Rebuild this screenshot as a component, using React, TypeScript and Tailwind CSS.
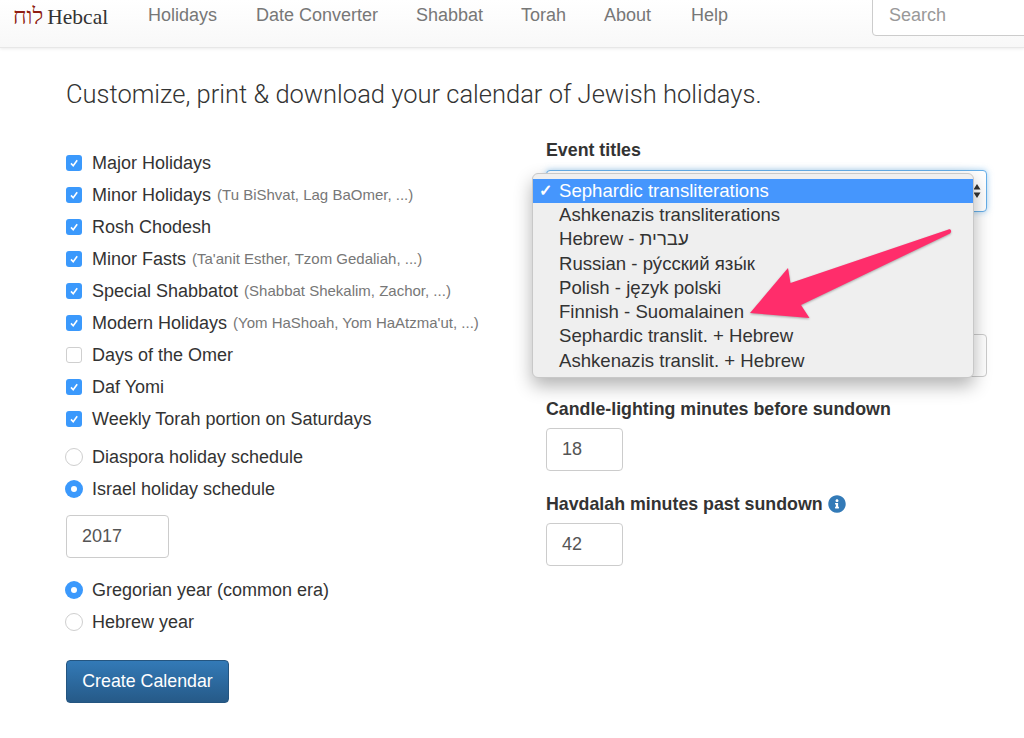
import { FaInfoCircle } from 'react-icons/fa';

const navLinks = [
  { label: 'Holidays', className: 'w-[108px]' },
  { label: 'Date Converter', className: 'w-[160px]' },
  { label: 'Shabbat', className: 'w-[105px]' },
  { label: 'Torah', className: 'w-[83px]' },
  { label: 'About', className: 'w-[87px]' },
  { label: 'Help', className: 'w-[60px]' },
];

const holidayOptions = [
  { label: 'Major Holidays', checked: true },
  { label: 'Minor Holidays', note: '(Tu BiShvat, Lag BaOmer, ...)', checked: true },
  { label: 'Rosh Chodesh', checked: true },
  { label: 'Minor Fasts', note: "(Ta'anit Esther, Tzom Gedaliah, ...)", checked: true },
  { label: 'Special Shabbatot', note: '(Shabbat Shekalim, Zachor, ...)', checked: true },
  { label: 'Modern Holidays', note: "(Yom HaShoah, Yom HaAtzma'ut, ...)", checked: true },
  { label: 'Days of the Omer', checked: false },
  { label: 'Daf Yomi', checked: true },
  { label: 'Weekly Torah portion on Saturdays', checked: true },
];

const titleOptions = [
  'Ashkenazis transliterations',
  'Hebrew - עברית',
  'Russian - ру́сский язы́к',
  'Polish - język polski',
  'Finnish - Suomalainen',
  'Sephardic translit. + Hebrew',
  'Ashkenazis translit. + Hebrew',
];

function CheckRow({ label, note, checked }: { label: string; note?: string; checked: boolean }) {
  return (
    <div className="flex h-[32px] items-center">
      {checked ? (
        <span className="flex h-[16px] w-[16px] items-center justify-center rounded-[3px] bg-[#3b99fc]">
          <svg width="10" height="10" viewBox="0 0 10 10" fill="none">
            <path d="M2 5.4 4.2 7.8 8.2 2.2" stroke="white" strokeWidth="1.6" />
          </svg>
        </span>
      ) : (
        <span className="h-[16px] w-[16px] rounded-[3px] border border-[#cfcfcf] bg-white" />
      )}
      <span className="ml-[10px] whitespace-nowrap text-[18px]">{label}</span>
      {note && <span className="ml-[6px] whitespace-nowrap text-[15px] text-[#777]">{note}</span>}
    </div>
  );
}

function RadioRow({ label, checked }: { label: string; checked: boolean }) {
  return (
    <div className="flex h-[32px] items-center">
      {checked ? (
        <span className="-ml-px flex h-[18px] w-[18px] items-center justify-center rounded-full bg-[#3b99fc]">
          <span className="h-[6px] w-[6px] rounded-full bg-white" />
        </span>
      ) : (
        <span className="-ml-px h-[18px] w-[18px] rounded-full border border-[#cfcfcf] bg-white" />
      )}
      <span className="ml-[9px] whitespace-nowrap text-[18px]">{label}</span>
    </div>
  );
}

function NumberBox({ value, className }: { value: string; className: string }) {
  return (
    <div className={`flex h-[43px] items-center rounded-[4px] border border-[#ccc] bg-white pl-[15px] text-[18px] text-[#555] ${className}`}>
      {value}
    </div>
  );
}

export default function App() {
  return (
    <div className="relative h-[738px] overflow-hidden bg-white font-['Liberation_Sans',sans-serif] text-[#333]">
      {/* Navbar */}
      <nav className="flex h-[48px] items-start overflow-hidden border-b border-[#e7e7e7] bg-gradient-to-b from-white to-[#f8f8f8] shadow-[0_1px_3px_rgba(0,0,0,0.08)]">
        <div className="flex h-[32px] w-[148px] shrink-0 items-center pl-[13px] pt-[3px] font-['Liberation_Serif',serif]">
          <span className="text-[23px] text-[#8f1d12]">לוח</span>
          <span className="ml-[4px] text-[21.5px] text-[#333]">Hebcal</span>
        </div>
        {navLinks.map((link) => (
          <div key={link.label} className={`flex h-[31px] shrink-0 items-center text-[18px] text-[#777] ${link.className}`}>
            {link.label}
          </div>
        ))}
        <div className="-mt-[6px] ml-[121px] flex h-[42px] w-[200px] shrink-0 items-center rounded-[4px] border border-[#ccc] bg-white pl-[16px] text-[18px] text-[#999]">
          Search
        </div>
      </nav>

      <main className="pl-[66px] pt-[26px]">
        <h1 className="h-[40px] whitespace-nowrap font-['Roboto',sans-serif] text-[25.5px] font-light leading-[40px]">
          Customize, print &amp; download your calendar of Jewish holidays.
        </h1>

        <div className="mt-[26px] flex items-start">
          {/* Left column */}
          <div className="w-[480px] shrink-0 pt-[7px]">
            {holidayOptions.map((option) => (
              <CheckRow key={option.label} {...option} />
            ))}
            <div className="mt-[6px]">
              <RadioRow label="Diaspora holiday schedule" checked={false} />
              <RadioRow label="Israel holiday schedule" checked />
            </div>
            <NumberBox value="2017" className="mt-[10px] w-[103px]" />
            <div className="mt-[16px]">
              <RadioRow label="Gregorian year (common era)" checked />
              <RadioRow label="Hebrew year" checked={false} />
            </div>
            <button className="mt-[22px] flex h-[43px] w-[163px] items-center justify-center rounded-[4px] border border-[#245580] bg-gradient-to-b from-[#337ab7] to-[#265a88] text-[17.8px] text-white">
              Create Calendar
            </button>
          </div>

          {/* Right column */}
          <div className="relative w-[441px] shrink-0">
            <div className="flex h-[20px] items-center text-[17.8px] font-bold">Event titles</div>
            <div className="mt-[10px] flex h-[42px] items-center justify-end rounded-[4px] border border-[#66afe9] bg-white pr-[5px] shadow-[0_0_6px_rgba(102,175,233,0.6)]">
              <svg width="8" height="16" viewBox="0 0 8 16" className="text-[#333]">
                <path d="M4 1 7.5 6.5H.5ZM4 15 .5 9.5h7Z" fill="currentColor" />
              </svg>
            </div>
            <NumberBox value="" className="mt-[122px] w-full" />
            <div className="mt-[22px] flex h-[20px] items-center whitespace-nowrap text-[17.8px] font-bold">
              Candle-lighting minutes before sundown
            </div>
            <NumberBox value="18" className="mt-[9px] w-[77px]" />
            <div className="mt-[23px] flex h-[20px] items-center whitespace-nowrap text-[17.8px] font-bold">
              Havdalah minutes past sundown
              <FaInfoCircle className="-mt-px ml-[5px] text-[#337ab7]" size={18} />
            </div>
            <NumberBox value="42" className="mt-[9px] w-[77px]" />

            {/* Open select menu */}
            <div className="absolute -left-[14px] top-[33px] h-[205px] w-[442px] rounded-[6px] border border-[#c8c8c8] bg-[#efefef] pt-[5px] text-[18.6px] leading-[24.3px] text-[#333] shadow-[0_8px_18px_rgba(0,0,0,0.3)]">
              <div className="flex h-[24px] items-center whitespace-nowrap bg-[#4596fd] text-white">
                <span className="w-[26px] pl-[6px] text-[16px] font-bold">✓</span>
                Sephardic transliterations
              </div>
              {titleOptions.map((title) => (
                <div key={title} className="h-[24.3px] whitespace-nowrap pl-[26px]">
                  {title}
                </div>
              ))}
            </div>
          </div>
        </div>
      </main>

      {/* Annotation arrow */}
      <svg className="pointer-events-none absolute left-0 top-0 drop-shadow-[0_1px_1px_rgba(0,0,0,0.3)]" width="1024" height="738" viewBox="0 0 1024 738">
        <path
          d="M948.5 229.5C950 229 951.5 230 951 232C950.5 233.5 949 234 947 235L801 305L809.5 318L750 313L788 268L790.5 283Z"
          fill="#ff2d6b"
        />
      </svg>
    </div>
  );
}
